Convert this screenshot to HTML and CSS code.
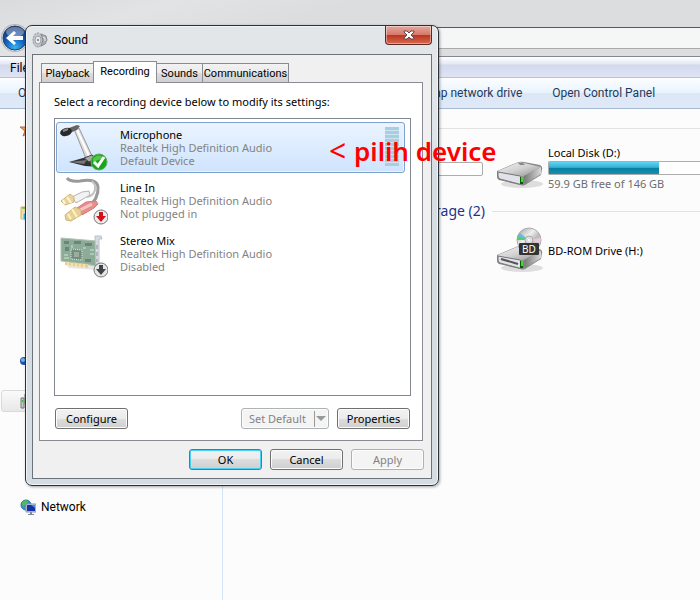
FILE: index.html
```
<!DOCTYPE html>
<html lang="en">
  <head>
    <meta charset="utf-8">
    <title>Sound</title>
    <link rel="stylesheet" href="styles.css">
  </head>
  <body>
    <!-- shared drawings -->
    <svg class="defs" width="0" height="0" aria-hidden="true">
      <defs>
        <linearGradient id="metal" x1="0" y1="0" x2="1" y2="1">
          <stop offset="0" stop-color="#f4f4f4"/>
          <stop offset="0.5" stop-color="#d0d0d0"/>
          <stop offset="1" stop-color="#8c8c8c"/>
        </linearGradient>
        <linearGradient id="side" x1="0" y1="0" x2="1" y2="0">
          <stop offset="0" stop-color="#777"/>
          <stop offset="1" stop-color="#d8d8d8"/>
        </linearGradient>
        <radialGradient id="blue" cx="0.5" cy="0.9" r="0.8">
          <stop offset="0" stop-color="#35b5f4"/>
          <stop offset="0.5" stop-color="#1562bd"/>
          <stop offset="1" stop-color="#173878"/>
        </radialGradient>
        <linearGradient id="disc" x1="0" y1="0" x2="1" y2="1">
          <stop offset="0" stop-color="#9b9b9b"/>
          <stop offset="0.4" stop-color="#eee"/>
          <stop offset="0.6" stop-color="#bbb"/>
          <stop offset="1" stop-color="#e6e6e6"/>
        </linearGradient>
        <symbol id="drive" viewBox="0 0 48 30">
          <ellipse cx="26" cy="25" rx="21" ry="4" fill="#000" opacity="0.12"/>
          <path d="M1 12 L20 4 Q24 2 28 3 L44 6 Q47 8 46 10 L45 16 L29 26 Q27 27 24 26 L3 21 Q1 20 1 18Z" fill="#888"/>
          <path d="M2 12 L21 4 Q24 3 28 4 L45 8 L28 17 Q26 18 23 17 L2 13Z" fill="url(#metal)"/>
          <path d="M28 17 L45 8 L45 15 L29 25Z" fill="url(#side)"/>
          <path d="M2 13 L24 17 Q27 18 27 21 L27 24 Q26 26 23 25 L4 20 Q2 19 2 17Z" fill="#e2e3ea" stroke="#777" stroke-width="1"/>
          <path d="M22 4 L27 4 L29 6 L24 6Z" fill="#888"/>
          <path d="M24 18 h3 v7 h-3z" fill="#0a5a0a"/>
          <path d="M25 18 h2 v5 h-2z" fill="#3fdb2c"/>
        </symbol>
      </defs>
    </svg>

    <div class="explorer">
      <header class="explorer-top">
        <button class="back" type="button" aria-label="Back">
          <svg width="26" height="26" viewBox="0 0 26 26">
            <circle cx="13" cy="13" r="12" fill="url(#blue)" stroke="#26426c"/>
            <ellipse cx="13" cy="7" rx="9" ry="5" fill="#fff" opacity="0.35"/>
            <path d="M4 13 L12 6 L14 8 L11 11 H21 V15 H11 L14 18 L12 20Z" fill="#fff"/>
          </svg>
        </button>
        <input class="address" type="text" aria-label="Address">
      </header>
      <nav class="menubar"><a href="#">File</a></nav>
      <nav class="toolbar">
        <a href="#">Organize</a>
        <a class="map-drive" href="#">Map network drive</a>
        <a href="#">Open Control Panel</a>
      </nav>

      <div class="explorer-body">
        <nav class="places">
          <a class="place" href="#" aria-label="Favorites">
            <svg width="16" height="16" viewBox="0 0 16 16">
              <path d="M8 1 L10 6 L16 6 L11 10 L13 15 L8 12 L3 15 L5 10 L0 6 L6 6Z" fill="#e8a158" stroke="#bd6b40"/>
            </svg>
          </a>
          <a class="place libraries" href="#" aria-label="Libraries">
            <svg width="16" height="16" viewBox="0 0 16 16">
              <path d="M1 2 h12 v12 h-12z" fill="#f5df94" stroke="#d4b45a"/>
              <path d="M2 3 h5" stroke="#4ba34b"/>
              <path d="M3 8 h9 v7 h-9z" fill="#45a8e4" stroke="#d5effc"/>
            </svg>
          </a>
          <a class="place homegroup" href="#" aria-label="Homegroup">
            <svg width="16" height="16" viewBox="0 0 16 16">
              <circle cx="4" cy="8" r="4" fill="#254fa8"/>
              <circle cx="3" cy="7" r="2" fill="#6eb2ec"/>
              <circle cx="11" cy="8" r="4" fill="#3aa45a"/>
            </svg>
          </a>
          <a class="place computer" href="#" aria-label="Computer">
            <svg width="16" height="16" viewBox="0 0 16 16">
              <path d="M1 5 h3 v10 h-3z" fill="#c9cdc9" stroke="#777"/>
              <path d="M2 7 h1 v2 h-1z" fill="#2c2"/>
              <path d="M5 1 h10 v10 h-10z" fill="#aaa" stroke="#777"/>
            </svg>
          </a>
          <a class="place network" href="#">
            <svg width="16" height="16" viewBox="0 0 16 16">
              <circle cx="6" cy="6" r="5" fill="#3c8fd0" stroke="#2b6fa8"/>
              <path d="M2 4 Q4 0 8 2 L7 5 L4 6 L3 9Z" fill="#55bd45"/>
              <path d="M8 7 L11 6 L10 10Z" fill="#9be08a"/>
              <path d="M6 5 h10 v8 h-10z" fill="#c9d2e2" stroke="#8a94a8"/>
              <path d="M7 6 h8 v6 h-8z" fill="#1433a8"/>
              <path d="M11 6 h4 v3z" fill="#5384e8"/>
              <path d="M10 13 h2 v2 h2 v1 h-6 v-1 h2z" fill="#7c8aa0"/>
            </svg>
            Network
          </a>
        </nav>

        <main class="files">
          <hr class="rule">
          <div class="row">
            <div class="cell first">
              <div class="space"></div>
            </div>
            <a class="cell drive" href="#">
              <svg class="drive-icon" width="48" height="30"><use href="#drive"/></svg>
              <span class="drive-text">
                <span>Local Disk (D:)</span>
                <span class="space"><span class="used" style="width: 59%"></span></span>
                <span class="free">59.9 GB free of 146 GB</span>
              </span>
            </a>
          </div>
          <div class="row heading">
            <h2>Devices with Removable Storage (2)</h2>
            <hr class="rule">
          </div>
          <div class="row">
            <div class="cell first"></div>
            <a class="cell drive bd" href="#">
              <svg class="drive-icon" width="48" height="46" viewBox="0 0 48 46">
                <use href="#drive" y="16" width="48" height="30"/>
                <path d="M5 32 L22 37" stroke="#555" stroke-width="2"/>
                <circle cx="33" cy="13" r="12" fill="url(#disc)" stroke="#aaa"/>
                <path d="M33 13 L22 8 L21 13Z" fill="#4ed070"/>
                <path d="M33 13 L24 6 L22 9Z" fill="#6fb5ec"/>
                <path d="M33 13 L45 11 L44 16Z" fill="#e9c7da"/>
                <circle cx="33" cy="13" r="4" fill="#ddd" stroke="#aaa"/>
                <circle cx="33" cy="13" r="1" fill="#fff"/>
                <rect x="23" y="16" width="20" height="12" rx="1" fill="#333"/>
                <text class="bd-label" x="33" y="26" text-anchor="middle">BD</text>
              </svg>
              <span>BD-ROM Drive (H:)</span>
            </a>
          </div>
        </main>
      </div>
    </div>

    <section class="dialog" role="dialog" aria-labelledby="dialog-title">
      <header class="titlebar">
        <svg width="16" height="16" viewBox="0 0 16 16">
          <ellipse cx="6" cy="8" rx="5" ry="7" fill="#c3c8cc" stroke="#8b9196" stroke-dasharray="2 1"/>
          <ellipse cx="6" cy="8" rx="3" ry="4" fill="#e9ecee" stroke="#9aa0a5"/>
          <circle cx="6" cy="8" r="1" fill="#777"/>
          <path d="M9 2 L14 4 L15 8 L13 12 L9 14 L11 8Z" fill="#a9afb5" stroke="#858b91"/>
          <path d="M11 5 L13 6 L13 9" fill="none" stroke="#eee"/>
        </svg>
        <h1 id="dialog-title">Sound</h1>
        <button class="close" type="button" aria-label="Close">
          <svg width="12" height="10" viewBox="0 0 12 10">
            <path d="M1 1 H4 L6 3 L8 1 H11 V2 L8 5 L11 8 V9 H8 L6 7 L4 9 H1 V8 L4 5 L1 2Z" fill="#fff" stroke="#5f4a52"/>
          </svg>
        </button>
      </header>

      <div class="client">
        <div class="tabs" role="tablist">
          <button class="tab playback" type="button" role="tab">Playback</button>
          <button class="tab active" type="button" role="tab" aria-selected="true">Recording</button>
          <button class="tab sounds" type="button" role="tab">Sounds</button>
          <button class="tab communications" type="button" role="tab">Communications</button>
        </div>

        <div class="panel" role="tabpanel">
          <p class="hint">Select a recording device below to modify its settings:</p>
          <ul class="devices">
            <li class="device selected">
              <svg width="48" height="48" viewBox="0 0 48 48">
                <path d="M14 5 L19 4 L33 34 L27 37Z" fill="#ddd" stroke="#999"/>
                <path d="M17 6 L30 34" stroke="#fff" stroke-width="2"/>
                <path d="M9 38 L23 34 L35 32 L45 37 L40 43 L25 42Z" fill="#333"/>
                <path d="M24 34 L32 31 L36 34 L29 38Z" fill="#aaa" stroke="#444"/>
                <path d="M10 38 L27 36 L24 40Z" fill="#777"/>
                <path d="M9 4 L17 1 L20 2 L17 6 L10 9Z" fill="#666"/>
                <ellipse cx="6" cy="8" rx="6" ry="4" fill="#292929" transform="rotate(-18 6 8)"/>
                <path d="M3 7 L8 5" stroke="#8c8c8c" stroke-width="2"/>
                <circle cx="39" cy="38" r="8" fill="#1ba51e" stroke="#5fae5e"/>
                <path d="M33 35 Q38 28 45 35 Q40 34 33 39Z" fill="#6cd45f" opacity="0.7"/>
                <path d="M34 38 L38 42 L44 33" fill="none" stroke="#fff" stroke-width="3"/>
              </svg>
              <div class="device-text">
                <strong>Microphone</strong>
                <span>Realtek High Definition Audio</span>
                <span>Default Device</span>
              </div>
              <div class="level"></div>
            </li>
            <li class="device">
              <svg width="48" height="48" viewBox="0 0 48 48">
                <path d="M7 1 Q10 5 20 4 Q37 1 38 10 Q39 22 27 31" fill="none" stroke="#9a9a9a" stroke-width="3"/>
                <path d="M32 4 Q38 10 33 17 Q30 20 27 20" fill="none" stroke="#c2c2c2" stroke-width="2"/>
                <path d="M12 20 L22 15 L29 14 L30 18 L16 26Z" fill="#f2f2f2" stroke="#b5b5b5"/>
                <path d="M1 24 L10 17 L14 20 L14 25 L5 28Z" fill="#ead49c" stroke="#d0b67a"/>
                <path d="M7 20 L11 26 M3 23 L5 27" stroke="#fff6d6" stroke-width="2"/>
                <path d="M17 31 L26 25 L36 24 L38 27 L34 31 L22 38Z" fill="#e88c8c" stroke="#d07c7c"/>
                <path d="M20 33 L32 27" stroke="#f8c5c5" stroke-width="3"/>
                <path d="M5 38 L15 30 L21 33 L21 38 L11 44 L6 43Z" fill="#e9d094" stroke="#d0b67a"/>
                <path d="M12 32 L17 40 M8 37 L11 42" stroke="#fff2c3" stroke-width="2"/>
                <circle cx="41" cy="40" r="7" fill="#ececec" stroke="#777"/>
                <path d="M39 35 h4 v4 h3 l-5 6 l-5 -6 h3z" fill="#d0121b"/>
              </svg>
              <div class="device-text">
                <strong>Line In</strong>
                <span>Realtek High Definition Audio</span>
                <span>Not plugged in</span>
              </div>
            </li>
            <li class="device">
              <svg width="48" height="48" viewBox="0 0 48 48">
                <path d="M6 34 L37 36 L36 40 L9 38Z" fill="#e6e6e6"/>
                <path d="M1 8 L37 11 L37 36 L1 31Z" fill="#8cac98" stroke="#b0c4b6"/>
                <path d="M4 11 h5 v3 h-5z M5 17 h4 v4 h-4z M14 11 h7 v3 h-7z M25 13 h7 v3 h-7z M25 29 h6 v3 h-6z" fill="#6b8676"/>
                <path d="M4 25 h4 M4 28 h5 M23 18 h3 M30 20 h4 M30 24 h4 M12 15 v3" stroke="#d1e5d4" stroke-width="1"/>
                <path d="M11 19 L22 20 L22 30 L11 29Z" fill="#748d7d" stroke="#dce8de" stroke-dasharray="1 1"/>
                <path d="M14 22 h5 v5 h-5z" fill="#98ac9f"/>
                <path d="M5 32 L28 34 L28 38 L5 35Z" fill="#e9cd8b"/>
                <path d="M8 32 v4 M12 33 v3 M16 33 v4 M20 34 v3 M24 34 v4" stroke="#fff4ce"/>
                <path d="M35 6 L41 6 L42 9 L39 9 L39 38 L36 37Z" fill="#d5dbe0" stroke="#bac1c7"/>
                <path d="M37 15 v4 M37 22 v4 M37 29 v3" stroke="#8a9298" stroke-width="1"/>
                <circle cx="41" cy="40" r="7" fill="#e6e6e6" stroke="#777"/>
                <path d="M39 35 h4 v4 h3 l-5 6 l-5 -6 h3z" fill="#404448"/>
              </svg>
              <div class="device-text">
                <strong>Stereo Mix</strong>
                <span>Realtek High Definition Audio</span>
                <span>Disabled</span>
              </div>
            </li>
          </ul>
          <div class="actions">
            <button class="btn" type="button">Configure</button>
            <button class="btn split" type="button" disabled>
              <span>Set Default</span>
              <svg width="12" height="16" viewBox="0 0 12 16"><path d="M0 0 v16" stroke="#999" stroke-width="2"/><path d="M2 5 h10 l-5 5z" fill="#999"/></svg>
            </button>
            <button class="btn" type="button">Properties</button>
          </div>
        </div>

        <footer class="dialog-footer">
          <button class="btn default" type="button">OK</button>
          <button class="btn" type="button">Cancel</button>
          <button class="btn" type="button" disabled>Apply</button>
        </footer>
      </div>
    </section>

    <p class="note"><span class="arrow">&lt;</span>pilih device</p>
  </body>
</html>
```

FILE: styles.css
```
* {
  box-sizing: border-box;
}
body {
  margin: 0;
  position: relative;
  min-height: 100vh;
  overflow: hidden;
  background: #fcfcfc;
  font-family: "Noto Sans", "Open Sans", sans-serif;
  font-size: 11px;
  line-height: 13px;
  color: #000;
}
button,
input {
  font: inherit;
}
a {
  color: inherit;
  text-decoration: none;
}
svg {
  display: block;
  flex: none;
}
.defs {
  position: absolute;
}

/* explorer window */
.explorer {
  display: flex;
  flex-direction: column;
  min-height: 100vh;
}
.explorer-top {
  display: flex;
  align-items: center;
  gap: 40px;
  height: 56px;
  padding-top: 20px;
  padding-left: 2px;
  background: linear-gradient(165deg, #d9dbdd, #e2e3e4 20%, #dcdddf 40%);
}
.back {
  padding: 0;
  border: 0;
  border-radius: 50%;
  background: none;
  box-shadow: 0 0 0 1px #aeb4ba;
}
.address {
  flex: 1;
  height: 22px;
  border: 1px solid #aaa;
  border-top-color: #555a5f;
  border-right: 0;
  background: #f5f7f6;
}
.menubar,
.toolbar,
.places {
  font-family: Roboto, "Noto Sans", sans-serif;
  font-size: 12px;
}
.menubar {
  height: 22px;
  padding: 5px 10px;
  border-top: 1px solid #84888e;
  border-bottom: 1px solid #b4c3d6;
  background: linear-gradient(#fff, #e4e8f5 35%, #d3d9ee 40%, #dfe3f4);
}
.toolbar {
  display: flex;
  align-items: center;
  height: 31px;
  padding-left: 18px;
  border-bottom: 1px solid #a6b9d3;
  background: linear-gradient(#fcfeff, #e9f3fd 50%, #dce7f5 50%, #dfe9f7);
  color: #1e395b;
}
.toolbar .map-drive {
  width: 457px;
  margin-right: 30px;
  text-align: right;
}
.explorer-body {
  display: flex;
  flex: 1;
}
.places {
  flex: none;
  width: 223px;
  padding-top: 9px;
  border-right: 1px solid #d6e5f5;
}
.place {
  display: flex;
  align-items: center;
  gap: 5px;
  height: 22px;
  margin-left: 1px;
  padding-left: 18px;
  border: 1px solid transparent;
  border-radius: 3px;
}
.libraries {
  margin-top: 62px;
}
.homegroup {
  margin-top: 126px;
}
.computer {
  margin-top: 18px;
  border-color: #d9d9d9;
  background: linear-gradient(#fafafa, #e8e8e8);
}
.network {
  margin-top: 84px;
}
.files {
  flex: 1;
  min-width: 0;
  padding-top: 19px;
}
.rule {
  flex: 1;
  height: 1px;
  margin: 0;
  border: 0;
  background: #e2e2e2;
}
.row {
  display: flex;
  gap: 13px;
}
.first {
  flex: none;
  width: 260px;
  padding-top: 33px;
  padding-left: 60px;
}
.cell.drive {
  display: flex;
  flex: 1;
  min-width: 0;
  align-items: center;
  gap: 4px;
  padding-top: 17px;
}
.drive-icon {
  margin-top: 12px;
}
.drive-text {
  display: flex;
  flex: 1;
  flex-direction: column;
  gap: 2px;
}
.space {
  display: block;
  height: 14px;
  border: 1px solid #adadad;
  border-radius: 2px;
  background: #fff;
}
.drive-text .space {
  border-right: 0;
  border-radius: 2px 0 0 2px;
}
.used {
  display: block;
  min-width: 110px;
  height: 100%;
  background: linear-gradient(#5fd4f0, #32b3d8 45%, #0c7d9e 50%, #1591b3);
}
.free {
  color: #6d6d6d;
}
.heading {
  align-items: center;
  gap: 7px;
  padding-top: 11px;
}
h2 {
  flex: none;
  width: 262px;
  margin: 0;
  color: #1e3287;
  font-size: 14px;
  font-weight: normal;
  line-height: 20px;
  text-align: right;
  white-space: nowrap;
}
.cell.bd {
  padding-top: 6px;
}
.bd .drive-icon {
  margin-top: 0;
}
.bd-label {
  fill: #fff;
  font-size: 10px;
}

/* sound dialog */
.dialog {
  position: absolute;
  top: 25px;
  left: 25px;
  width: 414px;
  padding: 0 6px 6px;
  border: 1px solid #2c3138;
  border-radius: 7px;
  background: linear-gradient(#e2e6e9, #dfe4e8 110px, #d5dce2 140px);
  box-shadow: inset 0 0 0 1px #f2f5f7, 1px 1px 3px rgba(0, 0, 0, 0.35);
}
.titlebar {
  display: flex;
  align-items: center;
  gap: 6px;
  height: 28px;
}
h1 {
  flex: 1;
  margin: 0;
  font-family: Roboto, "Noto Sans", sans-serif;
  font-size: 12px;
  font-weight: normal;
}
.close {
  display: flex;
  align-items: center;
  justify-content: center;
  align-self: flex-start;
  width: 47px;
  height: 19px;
  padding: 0;
  border: 1px solid #5c2a26;
  border-top: 0;
  border-radius: 0 0 4px 4px;
  background: linear-gradient(#e6a99e, #d6786a 48%, #b9341f 50%, #d9684f);
  box-shadow: inset 0 0 0 1px rgba(255, 255, 255, 0.4);
}
.client {
  padding: 6px 8px 8px 6px;
  border: 1px solid #6b727a;
  background: #f0f0f0;
}
.tabs {
  position: relative;
  display: flex;
  align-items: flex-end;
  padding-left: 2px;
}
.tab {
  height: 19px;
  margin-right: -1px;
  padding: 0;
  border: 1px solid #898c95;
  border-bottom: 0;
  background: linear-gradient(#f2f2f2, #ebebeb 50%, #dddddd 50%, #cfcfcf);
  font-family: Roboto, "Noto Sans", sans-serif;
}
.playback {
  width: 53px;
}
.sounds {
  width: 47px;
}
.communications {
  width: 87px;
}
.tab.active {
  width: 64px;
  height: 22px;
  margin-bottom: -1px;
  padding-bottom: 2px;
  background: #fff;
}
.panel {
  padding: 12px 11px 11px 14px;
  border: 1px solid #898c95;
  background: #fff;
}
.hint {
  margin: 0 0 10px;
}
.devices {
  min-height: 278px;
  margin: 0 0 12px;
  padding: 3px 5px 3px 1px;
  border: 1px solid #828790;
  list-style: none;
}
.device {
  display: flex;
  gap: 12px;
  height: 51px;
  margin-bottom: 2px;
  padding: 1px 5px 1px 3px;
  border: 1px solid transparent;
  border-radius: 3px;
}
.device.selected {
  border-color: #7da2ce;
  background: linear-gradient(#ebf4fe, #cfe4fe);
  box-shadow: inset 0 0 0 1px #e8f3ff;
}
.device-text {
  display: flex;
  flex: 1;
  flex-direction: column;
  padding-top: 4px;
  color: #838383;
}
.device-text strong {
  color: #000;
  font-weight: normal;
}
.level {
  width: 14px;
  height: 39px;
  margin-top: 3px;
  background: repeating-linear-gradient(#a8cfe0 0 3px, #cfe4f2 3px 4px);
}
.actions {
  display: flex;
  gap: 8px;
  padding: 0 1px;
}
.btn {
  width: 73px;
  height: 21px;
  padding: 0;
  border: 1px solid #707070;
  border-radius: 3px;
  background: linear-gradient(#f2f2f2, #ebebeb 50%, #dddddd 50%, #cfcfcf);
  box-shadow: inset 0 0 0 1px #fcfcfc;
  color: #000;
}
.btn:disabled {
  border-color: #adb2b5;
  background: #f4f4f4;
  color: #838383;
}
.btn.default {
  border-color: #3c7fb1;
  box-shadow: inset 0 0 0 1px #48d0f5;
}
.split {
  display: flex;
  align-items: center;
  justify-content: space-between;
  width: 88px;
  margin-left: auto;
  padding: 0 2px 0 7px;
}
.dialog-footer {
  display: flex;
  justify-content: flex-end;
  gap: 8px;
  margin-right: -1px;
  padding-top: 8px;
}

/* red note drawn over the windows */
.note {
  position: absolute;
  top: 135px;
  left: 329px;
  display: flex;
  gap: 10px;
  margin: 0;
  color: #f00;
  font-size: 26px;
  font-weight: 600;
  line-height: 32px;
  white-space: nowrap;
}
.arrow {
  width: 15px;
  font-size: 30px;
  font-weight: normal;
}
```
